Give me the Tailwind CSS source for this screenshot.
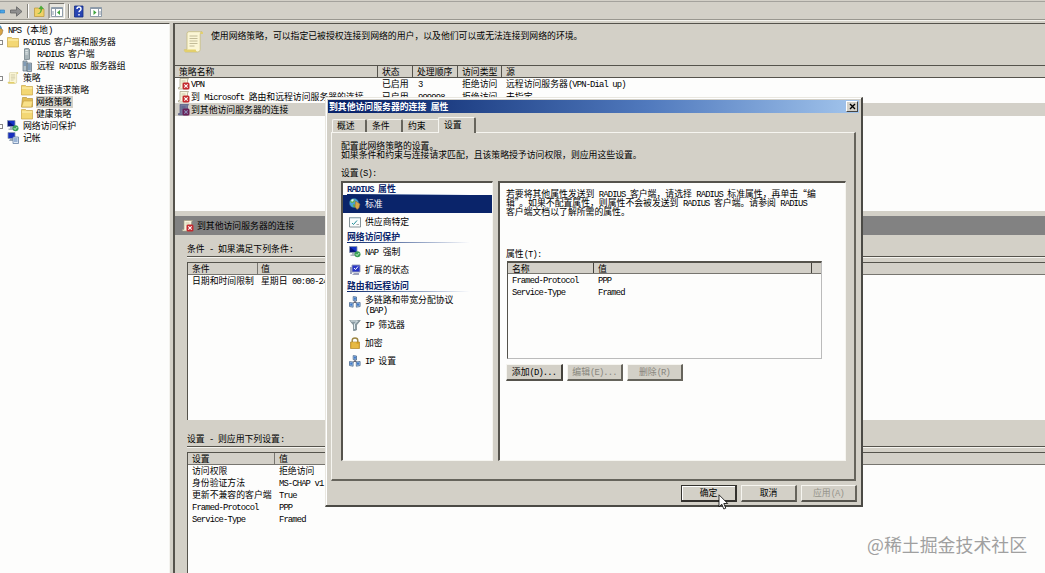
<!DOCTYPE html>
<html lang="zh-CN">
<head>
<meta charset="utf-8">
<title>NPS</title>
<script src="https://cdn.jsdelivr.net/npm/@tailwindcss/browser@4"></script>
</head>
<body class="relative flex h-[573px] w-[1045px] flex-col overflow-hidden bg-[#d3d0c7] font-['Noto_Sans_CJK_SC',sans-serif] text-[8.85px] leading-[12px] text-black [&_p]:whitespace-pre [&_span]:whitespace-pre">
<svg class="hidden">
  <symbol id="folder" viewBox="0 0 12 12"><path d="M.5 1.5h4l1 1h6v8.500H.5z" fill="#f3d774" stroke="#c9a545" stroke-width=".7"/><path d="M1 4h10.300" stroke="#fff3b8"/></symbol>
  <symbol id="folderopen" viewBox="0 0 12 12"><path d="M1.500 1.500h4l1 1h5v8.500H.5z" fill="#e2bd55" stroke="#b99539" stroke-width=".7"/><path d="M.5 11 2.500 5h9.300l-1.300 6z" fill="#f9e188" stroke="#c3a044" stroke-width=".6"/></symbol>
  <symbol id="server" viewBox="0 0 12 12"><path d="M3.500 .8 7 .3l1.500 1v10l-5 .4z" fill="#a9b5b9" stroke="#66757c" stroke-width=".7"/><path d="M4.300 2.500h2.500M4.300 4.300h2.500M4.300 6h2.500" stroke="#eef4f4" stroke-width=".8"/></symbol>
  <symbol id="servers" viewBox="0 0 12 12"><path d="M2 1h4v10H2zM6 3h4.500v8.500H6z" fill="#b2c0c8" stroke="#5c6f7f" stroke-width=".7"/><path d="M2.700 3H5M2.700 5H5M7 5h2.700M7 7h2.700M7 9h2.700" stroke="#39669c" stroke-width=".8"/></symbol>
  <symbol id="scroll" viewBox="0 0 20 22"><path d="M3.500 2Q4 .7 5.500.7h13q-1.800.6-1.800 2.300v15.500q0 2.500-2.500 2.500H2q-1.700-.6-1.200-2.500h2.700z" fill="#fbf6d5" stroke="#c5bb82" stroke-width=".8"/><path d="M.8 18.500h11.400q0 2.200 2 2.500H2q-1.700-.3-1.200-2.500M17 3V1l2.400-.3V3z" fill="#e3cf6b"/><path d="M6 5h8M6 7.500h8M6 10h8M6 12.500h8M6 15h5" stroke="#bbb491" stroke-width=".9"/></symbol>
  <symbol id="scrollx" viewBox="0 0 12 12"><path d="M2 .5h8.500L9.500 2v9H.5V9.500H2z" fill="#f8f4df" stroke="#a59e83" stroke-width=".7"/><path d="M3.500 3h4M3.500 5h3" stroke="#b9b18a" stroke-width=".7"/><rect x="4.500" y="4.500" width="7" height="7" rx="1.500" fill="#c3292e"/><path d="m6.300 6.300 3.400 3.400m0-3.400L6.300 9.700" stroke="#fff" stroke-width="1.100"/></symbol>
  <symbol id="scrollxsel" viewBox="0 0 12 12"><path d="M2 .5h8.500L9.500 2v9H.5V9.500H2z" fill="#76799c" stroke="#545a83" stroke-width=".7"/><path d="M3.500 3h4M3.500 5h3" stroke="#4c5078" stroke-width=".7"/><rect x="4.500" y="4.500" width="7" height="7" rx="1.500" fill="#6a2057"/><path d="m6.300 6.300 3.400 3.400m0-3.400L6.300 9.700" stroke="#8f8fb8" stroke-width="1.100"/></symbol>
  <symbol id="monitor" viewBox="0 0 12 12"><path d="M.5.500h7.500v6H.500z" fill="#1432c8" stroke="#8793aa" stroke-width=".8"/><path d="m1 1 6.500 5H1z" fill="#07157c"/><path d="M3 7h3v1.500h2V10H1.500V8.500H3z" fill="#aab3bd"/><circle cx="8.500" cy="8.300" r="3" fill="#3c9f57"/><path d="m6.900 8.200 1.200 1.300 2.200-2.600" fill="none" stroke="#d9ffd9" stroke-width=".9"/></symbol>
  <symbol id="account" viewBox="0 0 12 12"><path d="M1 .5h7v6H1z" fill="#182fbd" stroke="#8c99b1" stroke-width=".8"/><path d="M3 7h3v2H2z" fill="#98a8b5"/><path d="M6 5h5.500v6.500H6z" fill="#dfeaf5" stroke="#637da5" stroke-width=".8"/><path d="M7 7h3.500M7 9h3.500" stroke="#557cb7"/></symbol>
  <symbol id="globe" viewBox="0 0 12 12"><circle cx="5" cy="5" r="4.600" fill="#49a2d8" stroke="#286392" stroke-width=".5"/><path d="M1 3Q3 .5 5 1l1 2-2 2-2-.3zM4 6l3 1-1 2.600-2-1z" fill="#62af52"/><path d="M2 2 4 1l1 1-2 2z" fill="#d8f0ff"/><path d="m6.500 3 4.500 3-1 4-2 1.500L6 9z" fill="#d9a547" stroke="#80623b" stroke-width=".5"/></symbol>
  <symbol id="checkpage" viewBox="0 0 12 12"><path d="M.5 1.500h11v9.500H.5z" fill="#f9fcfc" stroke="#77878c" stroke-width=".9"/><path d="M1 2h10" stroke="#b1c6d0"/><path d="m3 7 1.500 1.500L8 4.500" fill="none" stroke="#208d99"/><path d="M7.500 8.500H10" stroke="#888" stroke-width=".7"/></symbol>
  <symbol id="extstate" viewBox="0 0 12 12"><path d="M3 1h8v7H3z" fill="#2936c5" stroke="#979eb7" stroke-width=".9"/><path d="m5 4 1.500 1.600L9 2.500" fill="none" stroke="#fff"/><path d="M1 3h2v7H1zM5 9h5v2H3z" fill="#9ba1bc"/></symbol>
  <symbol id="net" viewBox="0 0 12 12"><path d="M6 4v3M2.500 8 6 6l3.500 2" fill="none" stroke="#556" stroke-width="1"/><path d="M4.200.6 7.500 1v4l-3.300-.4zM.5 6.500l3.600.5v4.200L.5 10.500zM7.300 7l3.800-.5v4l-3.800.7z" fill="#bcd8f2" stroke="#49678d" stroke-width=".8"/><path d="M4.900 1.500h2v2.300h-2zM1.200 7.500h2.200v2.300H1.200zM8 7.500h2.300v2.300H8z" fill="#3f78c8"/></symbol>
  <symbol id="funnel" viewBox="0 0 12 12"><path d="M.7 1.500h10.600L7.500 6v5l-3 .7V6z" fill="#8a9ba3" stroke="#66777e" stroke-width=".6"/><path d="M1.500 2h7L5.500 5v5" fill="none" stroke="#e1ecef" stroke-width="1"/></symbol>
  <symbol id="lock" viewBox="0 0 12 12"><path d="M3.200 6V3.500Q3.200 1 6 1t2.800 2.500V6" fill="none" stroke="#9c8540" stroke-width="1.400"/><path d="M1.500 5h9v6.500h-9z" fill="#dba526" stroke="#a97b17" stroke-width=".6"/><path d="M2.500 6h5M2.500 8h7M2.500 10h7" stroke="#f8d774" stroke-width=".8"/></symbol>
</svg>

<!-- toolbar -->
<div class="flex h-[23px] shrink-0 flex-col">
  <div class="h-px"></div><div class="h-px bg-[#a4a29c]"></div>
  <div class="flex h-[17px] items-center">
    <svg class="h-[17px] w-[106px]" viewBox="0 2 106 17"><path d="M0 10h4.500v3H0z" fill="#4ba5e5" stroke="#2878bd" stroke-width=".6"/><path d="M10.500 10h6V6.800l5.500 4.700-5.500 4.700V13h-6z" fill="#909090" stroke="#626262" stroke-width=".8"/><path d="M27.500 4v14M68.500 4v14" stroke="#85837c"/><path d="M28.500 4v14M69.500 4v14" stroke="#fff"/><path d="M34.500 8h4l1 1h4.500v7.500h-9.500z" fill="#f0d267" stroke="#bd9b43" stroke-width=".8"/><path d="M37 14q4-1 3.500-5h-2L41 5.500 44 9h-2q0 5-5 5" fill="#4eaa38"/><path d="M49 18.500V3.500h15.500" fill="none" stroke="#77756f"/><path d="M49 18.500h15.500v-15" fill="none" stroke="#fff"/><path d="M50 4h14v14H50z" fill="#e6e4dd"/><path d="M51.500 7.500h11v9h-11z" fill="#fff" stroke="#77899a" stroke-width=".8"/><path d="M51.500 8.500h11M55.500 9v7M53 11v4" stroke="#8c9aa9"/><path d="m60 10-3 2.500 3 2.500z" fill="#3fa43c"/><path d="M74.500 6h8.500v11h-8.500z" fill="#2945b3" stroke="#152f83" stroke-width=".8"/><path d="M77 9q0-2 2-2t2 2q0 1-1 1.600t-1 1.700M79 14v1.500" fill="none" stroke="#fff" stroke-width="1.400"/><path d="M90.500 7.500h11v9h-11z" fill="#fff" stroke="#77899a" stroke-width=".8"/><path d="M90.500 8.500h11M98.500 9v7M100 11v4" stroke="#8c9aa9"/><path d="m93.500 10 3 2.500-3 2.500z" fill="#3fa43c"/></svg>
  </div>
  <div class="h-px bg-[#99978f]"></div><div class="h-px bg-[#f4f3ee]"></div>
</div>

<div class="flex h-[550px] gap-[3px]">
  <!-- navigation tree -->
  <nav class="w-[170px] shrink-0 border-t border-r border-t-[#55534c] border-r-[#f4f3ef] bg-[#fdfdfc]">
    <div class="flex h-[12px] items-center"><svg class="-ml-[8px] mr-[4px] size-[12px]"><use href="#globe"/></svg><span>NPS (本地)</span></div>
    <div class="flex h-[12px] items-center"><span class="mr-[4px] size-[5px] -ml-[2px] border border-[#888]"></span><svg class="mr-[4px] size-[12px]"><use href="#folder"/></svg><span>RADIUS 客户端和服务器</span></div>
    <div class="flex h-[12px] items-center pl-[21px]"><svg class="mr-[4px] size-[12px]"><use href="#server"/></svg><span>RADIUS 客户端</span></div>
    <div class="flex h-[12px] items-center pl-[21px]"><svg class="mr-[4px] size-[12px]"><use href="#servers"/></svg><span>远程 RADIUS 服务器组</span></div>
    <div class="flex h-[12px] items-center"><span class="mr-[4px] size-[5px] -ml-[2px] border border-[#888]"></span><svg class="mr-[4px] size-[12px]"><use href="#scroll"/></svg><span>策略</span></div>
    <div class="flex h-[12px] items-center pl-[21px]"><svg class="mr-[3px] size-[12px]"><use href="#folder"/></svg><span>连接请求策略</span></div>
    <div class="flex h-[12px] items-center pl-[21px]"><svg class="mr-[3px] size-[12px]"><use href="#folderopen"/></svg><span class="bg-[#d3d0c8] pr-[2px]">网络策略</span></div>
    <div class="flex h-[12px] items-center pl-[21px]"><svg class="mr-[3px] size-[12px]"><use href="#folder"/></svg><span>健康策略</span></div>
    <div class="flex h-[12px] items-center"><span class="mr-[4px] size-[5px] -ml-[2px] border border-[#888]"></span><svg class="mr-[4px] size-[12px]"><use href="#monitor"/></svg><span>网络访问保护</span></div>
    <div class="flex h-[12px] items-center pl-[7px]"><svg class="mr-[4px] size-[12px]"><use href="#account"/></svg><span>记帐</span></div>
  </nav>

  <!-- details -->
  <main class="flex w-[872px] flex-col border-t border-l-2 border-[#55534c]">
    <div class="flex h-[41px] shrink-0 items-start pt-[7px] pl-[8px]"><svg class="h-[22px] w-[21px]"><use href="#scroll"/></svg><span class="mt-[-1px] ml-[7px]">使用网络策略，可以指定已被授权连接到网络的用户，以及他们可以或无法连接到网络的环境。</span></div>
    <div class="flex h-[13px] shrink-0 items-center border-y border-[#55534c] leading-[11px]">
      <span class="h-[11px] w-[203px] border-r border-[#55534c] pl-[4px]">策略名称</span><span class="h-[11px] w-[35px] border-r border-[#55534c] pl-[4px]">状态</span><span class="h-[11px] w-[45px] border-r border-[#55534c] pl-[4px]">处理顺序</span><span class="h-[11px] w-[44px] border-r border-[#55534c] pl-[4px]">访问类型</span><span class="pl-[4px]">源</span>
    </div>
    <div class="h-[133px] shrink-0 bg-[#fdfdfc]">
      <div class="flex h-[12px] items-center pl-[3px]"><svg class="mr-px size-[12px]"><use href="#scrollx"/></svg><span class="w-[191px]">VPN</span><span class="w-[36px]">已启用</span><span class="w-[44px]">3</span><span class="w-[44px]">拒绝访问</span><span>远程访问服务器(VPN-Dial up)</span></div>
      <div class="mt-px flex h-[12px] items-center pl-[3px]"><svg class="mr-px size-[12px]"><use href="#scrollx"/></svg><span class="w-[191px]">到 Microsoft 路由和远程访问服务器的连接</span><span class="w-[36px]">已启用</span><span class="w-[44px]">999998</span><span class="w-[44px]">拒绝访问</span><span>未指定</span></div>
      <div class="flex h-[13px] items-center bg-[#d3d0c8] pl-[3px]"><svg class="mr-px size-[12px]"><use href="#scrollxsel"/></svg><span>到其他访问服务器的连接</span></div>
    </div>
    <div class="mt-[5px] flex h-[19px] shrink-0 items-center bg-[#828282] pl-[7px]"><svg class="mr-[3px] size-[12px]"><use href="#scrollx"/></svg><span>到其他访问服务器的连接</span></div>
    <div class="ml-[12px] flex h-[22px] shrink-0 items-end border-b border-[#55534c] shadow-[0_1px_0_#f4f3ee]"><span class="mb-px">条件 - 如果满足下列条件:</span></div>
    <section class="mt-[5px] ml-[12px] h-[158px] shrink-0 border-t border-l border-[#55534c] bg-[#fdfdfc]">
      <div class="flex h-[12px] border-b border-[#77756f] bg-[#d3d0c8] leading-[12px]"><span class="w-[70px] border-r border-[#77756f] pl-[4px]">条件</span><span class="pl-[3px]">值</span></div>
      <div class="flex h-[12px] pl-[4px]"><span class="w-[69px]">日期和时间限制</span><span>星期日 00:00-24:00</span></div>
    </section>
    <div class="ml-[12px] flex h-[27px] shrink-0 items-end border-b border-[#55534c] shadow-[0_1px_0_#f4f3ee]"><span class="mb-px">设置 - 则应用下列设置:</span></div>
    <section class="mt-[5px] ml-[12px] h-[122px] shrink-0 border-t border-l border-[#55534c] bg-[#fdfdfc]">
      <div class="flex h-[12px] border-b border-[#77756f] bg-[#d3d0c8] leading-[12px]"><span class="w-[87px] border-r border-[#77756f] pl-[4px]">设置</span><span class="pl-[4px]">值</span></div>
      <div class="grid auto-rows-[12px] grid-cols-[87px_auto] justify-start pl-[4px]"><span>访问权限</span><span>拒绝访问</span><span>身份验证方法</span><span>MS-CHAP v1</span><span>更新不兼容的客户端</span><span>True</span><span>Framed-Protocol</span><span>PPP</span><span>Service-Type</span><span>Framed</span></div>
    </section>
  </main>
</div>

<!-- policy properties window -->
<div class="absolute top-[97px] left-[325px] flex h-[410px] w-[538px] flex-col border-t border-r-2 border-b-2 border-l border-t-[#e9e7e0] border-r-[#4b4a45] border-b-[#4b4a45] border-l-[#e9e7e0] bg-[#d3d0c7] px-[2px] pt-[2px] shadow-[inset_1px_1px_0_#fff]">
  <div class="flex h-[13px] shrink-0 items-center justify-between bg-linear-to-r from-[#0a246a] from-5% via-[#5079bd] via-60% to-[#a3c5ec] pr-px pl-[1px] font-bold text-white"><span>到其他访问服务器的连接 属性</span>
    <span class="flex h-[11px] w-[12px] items-center justify-center border border-t-white border-r-[#444] border-b-[#444] border-l-white bg-[#d3d0c7]"><svg class="size-[7px]" viewBox="0 0 7 7"><path d="m1 1 5 5m0-5L1 6" stroke="#000" stroke-width="1.400"/></svg></span>
  </div>
  <div class="ml-[4px] flex h-[19px] shrink-0 items-end">
    <span class="h-[13px] w-[35px] rounded-t-[2px] border-t border-r-2 border-l border-t-[#f6f5f0] border-r-[#66645c] border-l-[#f6f5f0] pl-[4px]">概述</span><span class="h-[13px] w-[36px] rounded-t-[2px] border-t border-r-2 border-t-[#f6f5f0] border-r-[#66645c] pl-[5px]">条件</span><span class="h-[13px] w-[35px] border-t border-t-[#f6f5f0] pl-[5px]">约束</span><span class="z-10 -mb-px h-[16px] w-[38px] rounded-t-[2px] border-t border-r-2 border-l border-t-[#f6f5f0] border-r-[#66645c] border-l-[#f6f5f0] bg-[#d3d0c7] pt-px pl-[5px]">设置</span>
  </div>
  <div class="ml-[3px] flex h-[349px] w-[525px] shrink-0 flex-col border-t border-r-2 border-b-2 border-l border-t-[#f6f5f0] border-r-[#66645c] border-b-[#66645c] border-l-[#f6f5f0] pt-[8px] pl-[9px]">
    <p class="leading-[9px]">配置此网络策略的设置。
如果条件和约束与连接请求匹配，且该策略授予访问权限，则应用这些设置。</p>
    <div class="mt-[8px] h-[14px]">设置(S):</div>
    <div class="flex h-[280px] gap-[5px]">
      <div class="w-[152px] border-t-2 border-r border-b border-l-2 border-t-[#55534c] border-r-[#f6f5f0] border-b-[#f6f5f0] border-l-[#55534c] bg-[#fdfdfc]">
        <div class="ml-[4px] flex h-[12px] w-[124px] flex-col font-bold text-[#0a246a]"><span class="h-[11px] leading-[11px]">RADIUS 属性</span><span class="h-px bg-linear-to-r from-[#0a246a] to-white"></span></div>
        <div class="flex h-[18px] items-center bg-[#0a246a] pl-[6px] text-white"><svg class="mr-[4px] size-[12px]"><use href="#globe"/></svg><span class="-mt-px">标准</span></div>
        <div class="flex h-[18px] items-center pl-[6px]"><svg class="mr-[4px] size-[12px]"><use href="#checkpage"/></svg><span class="-mt-px">供应商特定</span></div>
        <div class="ml-[4px] flex h-[12px] w-[124px] flex-col font-bold text-[#0a246a]"><span class="h-[11px] leading-[12px]">网络访问保护</span><span class="h-px bg-linear-to-r from-[#0a246a] to-white"></span></div>
        <div class="flex h-[18px] items-center pl-[6px]"><svg class="mr-[4px] size-[12px]"><use href="#monitor"/></svg><span>NAP 强制</span></div>
        <div class="flex h-[18px] items-center pl-[6px]"><svg class="mr-[4px] size-[12px]"><use href="#extstate"/></svg><span class="-mt-px">扩展的状态</span></div>
        <div class="ml-[4px] flex h-[13px] w-[124px] flex-col font-bold text-[#0a246a]"><span class="h-[12px] leading-[14px]">路由和远程访问</span><span class="h-px bg-linear-to-r from-[#0a246a] to-white"></span></div>
        <div class="flex h-[24px] items-start pt-[4px] pl-[6px]"><svg class="mr-[4px] size-[12px]"><use href="#net"/></svg><span class="-mt-px leading-[10px]">多链路和带宽分配协议
(BAP)</span></div>
        <div class="flex h-[18px] items-center pl-[6px]"><svg class="mr-[4px] size-[12px]"><use href="#funnel"/></svg><span>IP 筛选器</span></div>
        <div class="flex h-[18px] items-center pl-[6px]"><svg class="mr-[4px] size-[12px]"><use href="#lock"/></svg><span>加密</span></div>
        <div class="flex h-[18px] items-center pl-[6px]"><svg class="mr-[4px] size-[12px]"><use href="#net"/></svg><span>IP 设置</span></div>
      </div>
      <div class="flex w-[348px] flex-col border-t-2 border-r border-b border-l-2 border-t-[#55534c] border-r-[#f6f5f0] border-b-[#f6f5f0] border-l-[#55534c] bg-[#fdfdfc] pt-[6px] pl-[6px]">
        <p class="h-[59px] leading-[9px]">若要将其他属性发送到 RADIUS 客户端，请选择 RADIUS 标准属性，再单击“编
辑”。如果不配置属性，则属性不会被发送到 RADIUS 客户端。请参阅 RADIUS
客户端文档以了解所需的属性。</p>
        <div class="h-[13px]">属性(T):</div>
        <div class="ml-px h-[98px] w-[315px] border-t-2 border-r border-b border-l border-t-[#55534c] border-r-[#bbb] border-b-[#bbb] border-l-[#55534c]">
          <div class="flex h-[11px] border-b border-[#77756f] bg-[#d3d0c8] leading-[11px]"><span class="w-[86px] border-r border-[#44423c] pl-[4px]">名称</span><span class="w-[218px] border-r border-[#44423c] pl-[4px]">值</span></div>
          <div class="grid auto-rows-[12px] grid-cols-[86px_auto] justify-start pl-[4px]"><span>Framed-Protocol</span><span>PPP</span><span>Service-Type</span><span>Framed</span></div>
        </div>
        <div class="mt-[5px] flex h-[17px] gap-[4px] text-center leading-[14px]">
          <span class="w-[57px] border border-t-[#f6f5f0] border-r-2 border-r-[#44423c] border-b-2 border-b-[#55534c] border-l-[#f6f5f0] bg-[#d3d0c7]">添加(D)...</span><span class="w-[56px] border border-t-[#f6f5f0] border-r-2 border-r-[#66645c] border-b-2 border-b-[#66645c] border-l-[#f6f5f0] bg-[#d3d0c7] text-[#88867e]">编辑(E)...</span><span class="w-[56px] border border-t-[#f6f5f0] border-r-2 border-r-[#66645c] border-b-2 border-b-[#66645c] border-l-[#f6f5f0] bg-[#d3d0c7] text-[#88867e]">删除(R)</span>
        </div>
      </div>
    </div>
  </div>
  <div class="mt-[4px] flex h-[17px] gap-[4px] pl-[353px] text-center leading-[14px]">
    <span class="w-[56px] border border-r-2 border-b-2 border-[#33312d] bg-[#d3d0c7] shadow-[inset_1px_1px_0_#fff]">确定</span><span class="w-[56px] border border-t-[#f6f5f0] border-r-2 border-r-[#66645c] border-b-2 border-b-[#55534c] border-l-[#f6f5f0]">取消</span><span class="w-[56px] border border-t-[#f6f5f0] border-r-2 border-r-[#66645c] border-b-2 border-b-[#55534c] border-l-[#f6f5f0] text-[#96948b]">应用(A)</span>
  </div>
</div>
<svg class="absolute top-[494px] left-[718px] h-[16px] w-[11px]" viewBox="0 0 11 16"><path d="M1 .8v12l2.800-2.600 2 4.800 2-.8-2-4.700h3.900z" fill="#fff" stroke="#000" stroke-width=".8"/></svg>
<div class="absolute top-[532px] left-[867px] text-[17.900px] leading-[24px] text-[#a0a0a0]">@稀土掘金技术社区</div>

<script>
// Set Latin runs to half the width of a Chinese character.
const walker = document.createTreeWalker(document.body, NodeFilter.SHOW_TEXT);
const nodes = [];
while (walker.nextNode()) nodes.push(walker.currentNode);
for (const node of nodes) {
  if (!node.parentElement.matches('span, p, div') || !node.data.trim() || node.data.startsWith('@')) continue;
  const parts = node.data.split(/([\x20-\x7e]+)/);
  node.replaceWith(...parts.map((part, i) => {
    if (i % 2 === 0) return part;
    const run = document.createElement('i');
    run.className = "font-['Liberation_Mono',monospace] leading-[0] tracking-[-0.87px] not-italic";
    run.textContent = part;
    return run;
  }));
}
</script>
</body>
</html>
